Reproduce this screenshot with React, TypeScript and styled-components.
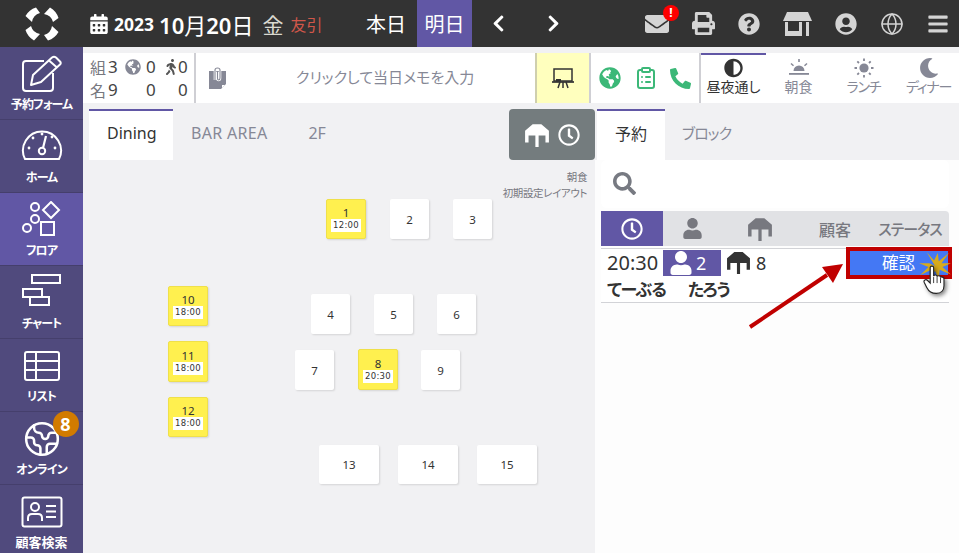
import styled, { createGlobalStyle } from "styled-components";
import {
  FaCalendarAlt,
  FaChevronLeft,
  FaChevronRight,
  FaEnvelope,
  FaPrint,
  FaQuestionCircle,
  FaUserCircle,
  FaBars,
  FaGlobeAmericas,
  FaWalking,
  FaPhoneAlt,
  FaAdjust,
  FaMoon,
  FaSearch,
  FaRegClock,
  FaUser,
} from "react-icons/fa";
import { Globe, Earth, ClipboardList } from "lucide-react";

const GlobalStyle = createGlobalStyle`
  html, body {
    margin: 0;
    padding: 0;
    background: #f1f1f3;
    font-family: "Noto Sans CJK JP", "Noto Sans", sans-serif;
    font-feature-settings: "palt";
    overflow: hidden;
  }
  * { box-sizing: border-box; }
`;

const TableGlyph = ({ size = 24, color = "currentColor" }: { size?: number; color?: string }) => (
  <svg width={size} height={size} viewBox="0 0 24 24" fill={color}>
    <path d="M8 2 H16 L23 8 V19 H19.8 V12.5 H13.5 V23 H10.5 V12.5 H4.2 V19 H1 V8 Z" />
  </svg>
);

const StoreGlyph = () => (
  <svg width="29" height="26" viewBox="0 0 29 26" fill="#d4d4d4">
    <path d="M4 1 H25 L29 10 H0 Z" />
    <path d="M2 11 H5 V20 H16 V11 H19 V25 H2 Z" />
    <rect x="23" y="11" width="3" height="14" />
  </svg>
);

const Logo = () => (
  <svg width="34" height="34" viewBox="0 0 34 34" fill="#fff">
    {[0, 90, 180, 270].map((r) => (
      <path
        key={r}
        d="M0.5 9 A18.5 18.5 0 0 1 11 0.5 L15 6 A11 11 0 0 0 7 15 Z"
        transform={`rotate(${r} 17 17)`}
      />
    ))}
  </svg>
);

const EditIcon = () => (
  <svg width="42" height="38" viewBox="0 0 42 38" fill="none" stroke="#fff" strokeWidth="2">
    <path d="M23 6 H5 Q2 6 2 9 V33 Q2 36 5 36 H29 Q32 36 32 33 V18" />
    <path d="M12 20 L31 2.5 Q33 1 35 2.5 L39 6.5 Q40.5 8 39 9.5 L20 27 L10 30 Z" strokeLinejoin="round" />
    <path d="M28 5.5 L36 12.5" />
  </svg>
);

const GaugeIcon = () => (
  <svg width="42" height="38" viewBox="0 0 42 38" fill="none" stroke="#fff" strokeWidth="2">
    <path d="M4 31 A19 19 0 1 1 38 31 Z" strokeLinejoin="round" />
    <circle cx="21" cy="23" r="3.2" />
    <path d="M22 20 L25 8" strokeWidth="2.2" />
    <g fill="#fff" stroke="none">
      <circle cx="8" cy="20" r="1.4" />
      <circle cx="12" cy="10" r="1.4" />
      <circle cx="21" cy="6" r="1.4" />
      <circle cx="31" cy="9" r="1.4" />
      <circle cx="34" cy="20" r="1.4" />
    </g>
  </svg>
);

const FloorIcon = () => (
  <svg width="40" height="38" viewBox="0 0 40 38" fill="none" stroke="#fff" strokeWidth="2">
    <circle cx="13" cy="6" r="4" />
    <circle cx="13" cy="18" r="4" />
    <circle cx="5" cy="27" r="4" />
    <path d="M29 1 L37 9 L29 17 L21 9 Z" />
    <rect x="19" y="21" width="13" height="13" />
  </svg>
);

const ChartIcon = () => (
  <svg width="40" height="40" viewBox="0 0 40 40" fill="none" stroke="#fff" strokeWidth="2">
    <rect x="10" y="2" width="28" height="8" />
    <rect x="1" y="16" width="19" height="8" />
    <rect x="8" y="24" width="19" height="8" />
  </svg>
);

const ListIcon = () => (
  <svg width="38" height="32" viewBox="0 0 38 32" fill="none" stroke="#fff" strokeWidth="2">
    <rect x="2" y="2" width="34" height="28" rx="2" />
    <path d="M2 11 H36 M2 20 H36 M13 2 V30" />
  </svg>
);

const CardIcon = () => (
  <svg width="42" height="32" viewBox="0 0 42 32" fill="none" stroke="#fff" strokeWidth="2">
    <rect x="1.5" y="1.5" width="39" height="29" rx="2" />
    <circle cx="14" cy="11" r="4" />
    <path d="M7 25 V22 Q7 18 11 18 H17 Q21 18 21 22 V25" />
    <path d="M25 10 H35 M25 15.5 H35 M25 21 H35" />
  </svg>
);

const MemoIcon = () => (
  <svg width="19" height="23" viewBox="0 0 19 23">
    <path d="M1 4 H18 V17 L13 22 H1 Z" fill="#868896" />
    <path d="M14 21 L14 18 H17 Z" fill="#fff" />
    <path
      d="M7 13 V3 Q7 1 9.5 1 Q12 1 12 3 V11 Q12 13 10.5 13 Q9.5 13 9.5 11 V5"
      fill="none"
      stroke="#fff"
      strokeWidth="2.6"
    />
    <path
      d="M7 13 V3 Q7 1 9.5 1 Q12 1 12 3 V11 Q12 13 10.5 13 Q9.5 13 9.5 11 V5"
      fill="none"
      stroke="#868896"
      strokeWidth="1.1"
    />
  </svg>
);

const SunriseIcon = () => (
  <svg width="22" height="20" viewBox="0 0 22 20" fill="#868896">
    <path d="M5.5 13 A5.5 5.5 0 0 1 16.5 13 Z" />
    <rect x="1" y="15" width="20" height="1.8" />
    <rect x="10.2" y="1" width="1.6" height="3" />
    <path d="M3.5 5 L6 7.2 L5 8.2 L2.5 6 Z M18.5 5 L16 7.2 L17 8.2 L19.5 6 Z" />
  </svg>
);

const SunIcon = () => (
  <svg width="20" height="20" viewBox="0 0 20 20" fill="#868896" stroke="#868896">
    <circle cx="10" cy="10" r="4.6" stroke="none" />
    <path
      d="M10 0.5 V3 M10 17 V19.5 M0.5 10 H3 M17 10 H19.5 M3.3 3.3 L5 5 M15 15 L16.7 16.7 M16.7 3.3 L15 5 M5 15 L3.3 16.7"
      strokeWidth="1.8"
    />
  </svg>
);

const BoardIcon = () => (
  <svg width="24" height="24" viewBox="0 0 24 24" fill="none" stroke="#333" strokeWidth="1.5">
    <rect x="3" y="3" width="18" height="12" />
    <path d="M1 16 H23" strokeWidth="1.7" />
    <path d="M9 16 L7 22 M12 16 V22 M15 16 L17 22" />
    <rect x="5" y="13" width="5" height="2.4" fill="#333" stroke="none" />
  </svg>
);

const HandCursor = () => (
  <svg width="23" height="31" viewBox="0 0 26 36">
    <path
      d="M8 3 C8 0.8 12 0.8 12 3 V13 C12.5 11 16 11 16 13.5 C16.5 12 20 12 20 14.5 C20.5 13.5 24 13.8 24 16 V24 C24 29 21 33 15 33 C9 33 6 30 4 26 L1 20 C0 17.5 3 16 5 18 L8 21 Z"
      fill="#fff"
      stroke="#222"
      strokeWidth="1.3"
    />
    <path d="M12 14 V21 M16 14 V21 M20 15 V21" stroke="#222" strokeWidth="1" />
  </svg>
);

const Burst = () => (
  <svg width="32" height="28" viewBox="0 0 34 30">
    <path
      d="M17 15 L8 0 L16 9 L20 1 L21 10 L32 1 L24 12 L34 12 L25 16 L34 24 L22 19 L21 29 L17 20 L11 29 L13 19 L1 25 L10 16 L0 12 L11 12 Z"
      fill="#d8ab1c"
    />
  </svg>
);

const menu = [
  { label: "予約フォーム", icon: <EditIcon />, tight: true },
  { label: "ホーム", icon: <GaugeIcon />, tight: true },
  { label: "フロア", icon: <FloorIcon />, active: true, tight: true },
  { label: "チャート", icon: <ChartIcon />, tight: true },
  { label: "リスト", icon: <ListIcon />, tight: true },
  { label: "オンライン", icon: <Earth size={38} strokeWidth={1.6} />, badge: "8", tight: true },
  { label: "顧客検索", icon: <CardIcon /> },
];

const tables = [
  { n: "1", x: 326, y: 199, w: 40, h: 40, time: "12:00" },
  { n: "2", x: 390, y: 199, w: 39, h: 40 },
  { n: "3", x: 453, y: 199, w: 39, h: 40 },
  { n: "4", x: 311, y: 294, w: 39, h: 40 },
  { n: "5", x: 374, y: 294, w: 39, h: 40 },
  { n: "6", x: 437, y: 294, w: 39, h: 40 },
  { n: "7", x: 295, y: 350, w: 39, h: 40 },
  { n: "8", x: 358, y: 349, w: 40, h: 41, time: "20:30" },
  { n: "9", x: 421, y: 350, w: 39, h: 40 },
  { n: "10", x: 168, y: 286, w: 40, h: 40, time: "18:00" },
  { n: "11", x: 168, y: 341, w: 40, h: 41, time: "18:00" },
  { n: "12", x: 168, y: 397, w: 40, h: 40, time: "18:00" },
  { n: "13", x: 319, y: 445, w: 60, h: 39 },
  { n: "14", x: 398, y: 445, w: 60, h: 39 },
  { n: "15", x: 477, y: 445, w: 60, h: 39 },
];

export default function App() {
  return (
    <Page>
      <GlobalStyle />
      <TopBar>
        <LogoSlot>
          <Logo />
        </LogoSlot>
        <DateBlock>
          <FaCalendarAlt size={20} color="#fff" />
          <Year>2023</Year>
          <MonthDay>
            <b>10</b>月<b>20</b>日
          </MonthDay>
          <Weekday>金</Weekday>
          <Rokuyo>友引</Rokuyo>
        </DateBlock>
        <DayButton>本日</DayButton>
        <DayButton $active>明日</DayButton>
        <NavArrows>
          <FaChevronLeft size={19} />
          <FaChevronRight size={19} />
        </NavArrows>
        <TopIcons>
          <MailIcon>
            <FaEnvelope size={24} />
            <AlertDot>!</AlertDot>
          </MailIcon>
          <FaPrint size={23} />
          <FaQuestionCircle size={22} />
          <StoreGlyph />
          <FaUserCircle size={22} />
          <Globe size={24} strokeWidth={1.5} />
          <FaBars size={22} />
        </TopIcons>
      </TopBar>
      <Body>
        <SideNav>
          {menu.map((m) => (
            <SideItem key={m.label} $active={m.active}>
              <SideIcon>
                {m.icon}
                {m.badge && <SideBadge>{m.badge}</SideBadge>}
              </SideIcon>
              <SideLabel $tight={m.tight}>{m.label}</SideLabel>
            </SideItem>
          ))}
        </SideNav>
        <Main>
          <StatusBar>
            <Counts>
              <CountLabel>組</CountLabel>
              <CountNum>3</CountNum>
              <FaGlobeAmericas size={16} color="#868896" />
              <CountNum>0</CountNum>
              <FaWalking size={16} color="#555" />
              <CountNum>0</CountNum>
              <CountLabel>名</CountLabel>
              <CountNum>9</CountNum>
              <span />
              <CountNum>0</CountNum>
              <span />
              <CountNum>0</CountNum>
            </Counts>
            <Memo>
              <MemoIcon />
              <MemoText>クリックして当日メモを入力</MemoText>
            </Memo>
            <BoardButton>
              <BoardIcon />
            </BoardButton>
            <QuickIcons>
              <FaGlobeAmericas size={22} />
              <ClipboardList size={24} strokeWidth={2} />
              <FaPhoneAlt size={21} />
            </QuickIcons>
            <Meals>
              <Meal $active>
                <FaAdjust size={19} />
                <span>昼夜通し</span>
              </Meal>
              <Meal>
                <SunriseIcon />
                <span>朝食</span>
              </Meal>
              <Meal $kana>
                <SunIcon />
                <span>ランチ</span>
              </Meal>
              <Meal $kana>
                <FaMoon size={20} />
                <span>ディナー</span>
              </Meal>
            </Meals>
          </StatusBar>
          <Columns>
            <FloorColumn>
              <TabRow>
                <FloorTab $active>Dining</FloorTab>
                <FloorTab>BAR AREA</FloorTab>
                <FloorTab>2F</FloorTab>
                <ModeButton>
                  <TableGlyph size={26} color="#fff" />
                  <FaRegClock size={22} />
                </ModeButton>
              </TabRow>
              <LayoutNote>
                朝食
                <br />
                初期設定レイアウト
              </LayoutNote>
            </FloorColumn>
            <BookingColumn>
              <BookingTabs>
                <BookingTab $active>予約</BookingTab>
                <BookingTab>ブロック</BookingTab>
              </BookingTabs>
              <BookingPanel>
                <SearchBox>
                  <FaSearch size={23} color="#777a82" />
                </SearchBox>
                <HeaderRow>
                  <HeaderCell $active $w={62}>
                    <FaRegClock size={22} />
                  </HeaderCell>
                  <HeaderCell $w={58}>
                    <FaUser size={21} />
                  </HeaderCell>
                  <HeaderCell $w={78}>
                    <TableGlyph size={26} />
                  </HeaderCell>
                  <HeaderCell $w={72}>顧客</HeaderCell>
                  <HeaderCell $w={78} $kana>
                    ステータス
                  </HeaderCell>
                </HeaderRow>
                <BookingRow>
                  <BookingTop>
                    <Time>20:30</Time>
                    <Guests>
                      <FaUser size={24} />
                      <span>2</span>
                    </Guests>
                    <TableNo>
                      <TableGlyph size={25} color="#333" />
                      <span>8</span>
                    </TableNo>
                    <StatusChip>確認</StatusChip>
                  </BookingTop>
                  <GuestName>
                    <span>てーぶる</span>
                    <span>たろう</span>
                  </GuestName>
                </BookingRow>
              </BookingPanel>
            </BookingColumn>
          </Columns>
        </Main>
      </Body>
      {tables.map((t) => (
        <TableCard
          key={t.n}
          $x={t.x}
          $y={t.y}
          $w={t.w}
          $h={t.h}
          $busy={!!t.time}
        >
          <span>{t.n}</span>
          {t.time && <TimeTag>{t.time}</TimeTag>}
        </TableCard>
      ))}
      <ArrowLayer width="100" height="66" viewBox="0 0 100 66">
        <path d="M3 63 L80 11" stroke="#c00000" strokeWidth="4" />
        <path d="M96 0 L75 3 L86 19 Z" fill="#c00000" />
      </ArrowLayer>
      <BurstLayer>
        <Burst />
      </BurstLayer>
      <HandLayer>
        <HandCursor />
      </HandLayer>
    </Page>
  );
}

const Page = styled.div`
  position: relative;
  width: 959px;
  height: 553px;
  overflow: hidden;
  background: #f1f1f3;
`;

const TopBar = styled.header`
  display: flex;
  align-items: center;
  height: 47px;
  background: #333;
  color: #fff;
`;

const LogoSlot = styled.div`
  width: 83px;
  display: flex;
  justify-content: center;
`;

const DateBlock = styled.div`
  display: flex;
  align-items: center;
  width: 272px;
  padding-left: 6px;
`;

const Year = styled.span`
  font: 700 17.5px "Noto Sans", sans-serif;
  margin-left: 5px;
`;

const MonthDay = styled.span`
  font-size: 22px;
  font-weight: 400;
  margin-left: 5px;
  b {
    font: 600 22px "Noto Sans", sans-serif;
  }
`;

const Weekday = styled.span`
  font-size: 21px;
  color: #d9d9d0;
  margin-left: 9px;
`;

const Rokuyo = styled.span`
  font-size: 16px;
  color: #d0574a;
  margin-left: 7px;
`;

const DayButton = styled.div<{ $active?: boolean }>`
  width: ${(p) => (p.$active ? 55 : 62)}px;
  height: 47px;
  display: flex;
  align-items: center;
  justify-content: center;
  font-size: 20px;
  background: ${(p) => (p.$active ? "#6157a5" : "transparent")};
`;

const NavArrows = styled.div`
  display: flex;
  align-items: center;
  gap: 36px;
  margin-left: 17px;
`;

const TopIcons = styled.div`
  margin-left: auto;
  width: 314px;
  padding-right: 10px;
  display: flex;
  align-items: center;
  justify-content: space-between;
  color: #d4d4d4;
`;

const MailIcon = styled.div`
  position: relative;
  display: flex;
`;

const AlertDot = styled.span`
  position: absolute;
  top: -7px;
  right: -10px;
  width: 16px;
  height: 16px;
  border-radius: 50%;
  background: #f00;
  color: #fff;
  font: 700 12px/16px "Noto Sans", sans-serif;
  text-align: center;
`;

const Body = styled.div`
  display: flex;
  height: 506px;
`;

const SideNav = styled.nav`
  width: 83px;
  flex: none;
  background: #504a7d;
`;

const SideItem = styled.div<{ $active?: boolean }>`
  height: 73px;
  display: flex;
  flex-direction: column;
  align-items: center;
  padding-top: 6px;
  border-bottom: 1px solid #453f6c;
  color: #fff;
  background: ${(p) => (p.$active ? "#6157a5" : "transparent")};
`;

const SideIcon = styled.div`
  position: relative;
  height: 42px;
  display: flex;
  align-items: center;
  justify-content: center;
`;

const SideBadge = styled.span`
  position: absolute;
  top: -7px;
  right: -18px;
  width: 26px;
  height: 26px;
  border-radius: 50%;
  background: #d27b00;
  color: #fff;
  font: 700 18px/26px "Noto Sans", sans-serif;
  text-align: center;
`;

const SideLabel = styled.span<{ $tight?: boolean }>`
  font-size: ${(p) => (p.$tight ? 12 : 13)}px;
  letter-spacing: ${(p) => (p.$tight ? "-0.9px" : "0")};
  font-weight: 700;
  line-height: 18px;
  white-space: nowrap;
`;

const Main = styled.main`
  flex: 1;
  display: flex;
  flex-direction: column;
  min-width: 0;
`;

const StatusBar = styled.div`
  display: flex;
  height: 50px;
  margin-top: 6px;
  background: #fff;
`;

const Counts = styled.div`
  flex: none;
  width: 113px;
  padding: 2px 0 0 7px;
  border-right: 2px solid #cfcfd4;
  display: grid;
  grid-template-columns: 18px 17px 21px 17px 15px 12px;
  grid-auto-rows: 23px;
  align-items: center;
  font-size: 16px;
  color: #444;
`;

const CountLabel = styled.span`
  color: #77787f;
`;

const CountNum = styled.span`
  font: 400 17px "Noto Sans", sans-serif;
  color: #444;
`;

const Memo = styled.div`
  flex: none;
  width: 339px;
  display: flex;
  align-items: center;
  padding-left: 12px;
`;

const MemoText = styled.span`
  font-size: 15px;
  line-height: 20px;
  margin: -2px 0 0 69px;
  color: #868896;
`;

const BoardButton = styled.div`
  flex: none;
  width: 56px;
  display: flex;
  align-items: center;
  justify-content: center;
  background: #ffffbe;
  border-left: 2px solid #cfcfae;
  border-right: 2px solid #cfcfd4;
`;

const QuickIcons = styled.div`
  flex: none;
  width: 110px;
  padding: 0 8px;
  display: flex;
  align-items: center;
  justify-content: space-between;
  color: #3cb878;
  border-right: 2px solid #cfcfd4;
`;

const Meals = styled.div`
  flex: none;
  display: flex;
`;

const Meal = styled.div<{ $active?: boolean; $kana?: boolean }>`
  width: 65px;
  flex: none;
  display: flex;
  flex-direction: column;
  align-items: center;
  justify-content: flex-start;
  padding-top: 3px;
  font-size: 14px;
  letter-spacing: ${(p) => (p.$kana ? "-1.2px" : "0")};
  line-height: 19px;
  white-space: nowrap;
  color: ${(p) => (p.$active ? "#333" : "#868896")};
  border-top: 2px solid ${(p) => (p.$active ? "#6157a5" : "transparent")};
  svg {
    height: 20px;
    margin-bottom: -1px;
  }
`;

const Columns = styled.div`
  flex: 1;
  display: flex;
  margin-top: 6px;
`;

const FloorColumn = styled.section`
  width: 512px;
  position: relative;
  padding-left: 6px;
`;

const TabRow = styled.div`
  display: flex;
  height: 51px;
`;

const FloorTab = styled.div<{ $active?: boolean }>`
  padding: 0 18px 6px;
  display: flex;
  align-items: center;
  font: 400 16px "Noto Sans", sans-serif;
  letter-spacing: 0.3px;
  color: ${(p) => (p.$active ? "#333" : "#868896")};
  background: ${(p) => (p.$active ? "#fff" : "transparent")};
  border-top: 2px solid ${(p) => (p.$active ? "#6157a5" : "transparent")};
  &:first-child {
    width: 84px;
    letter-spacing: 0;
  }
  & + & + & {
    margin-left: 5px;
    letter-spacing: 0;
  }
`;

const ModeButton = styled.div`
  margin-left: auto;
  width: 86px;
  display: flex;
  align-items: center;
  justify-content: center;
  gap: 8px;
  background: #747c7e;
  color: #fff;
  border-radius: 4px;
`;

const LayoutNote = styled.div`
  position: absolute;
  top: 60px;
  right: 8px;
  text-align: right;
  font-size: 10.5px;
  letter-spacing: -0.4px;
  line-height: 16px;
  color: #77787f;
`;

const BookingColumn = styled.section`
  flex: 1;
  display: flex;
  flex-direction: column;
`;

const BookingTabs = styled.div`
  display: flex;
  height: 51px;
  padding-left: 2px;
`;

const BookingTab = styled.div<{ $active?: boolean }>`
  padding: 0 17px 6px;
  min-width: 68px;
  display: flex;
  align-items: center;
  justify-content: center;
  font-size: 16px;
  color: ${(p) => (p.$active ? "#333" : "#868896")};
  background: ${(p) => (p.$active ? "#fff" : "transparent")};
  border-top: 2px solid ${(p) => (p.$active ? "#6157a5" : "transparent")};
  & + & {
    font-size: 15px;
    letter-spacing: -1px;
  }
`;

const BookingPanel = styled.div`
  flex: 1;
  background: #fdfdfd;
  padding: 0 10px 0 6px;
`;

const SearchBox = styled.div`
  height: 48px;
  padding: 0 0 2px 12px;
  display: flex;
  align-items: center;
  background: #fff;
  border-radius: 6px;
`;

const HeaderRow = styled.div`
  display: flex;
  height: 35px;
  margin-top: 3px;
  background: #e1e2e5;
  border-radius: 0 4px 0 0;
  color: #77787f;
`;

const HeaderCell = styled.div<{ $active?: boolean; $kana?: boolean; $w: number }>`
  width: ${(p) => p.$w}px;
  display: flex;
  align-items: center;
  justify-content: center;
  font-size: ${(p) => (p.$kana ? 15 : 16)}px;
  letter-spacing: ${(p) => (p.$kana ? "-1px" : "0")};
  font-weight: 500;
  white-space: nowrap;
  color: ${(p) => (p.$active ? "#fff" : "#77787f")};
  background: ${(p) => (p.$active ? "#6157a5" : "transparent")};
`;

const BookingRow = styled.div`
  margin-top: 2px;
  height: 55px;
  background: #fff;
  border-top: 1px solid #d2d3d7;
  border-bottom: 1px solid #d2d3d7;
`;

const BookingTop = styled.div`
  display: flex;
  align-items: center;
  height: 27px;
  position: relative;
`;

const Time = styled.span`
  width: 62px;
  padding-left: 6px;
  font: 400 20px "Noto Sans", sans-serif;
  color: #333;
`;

const Guests = styled.div`
  width: 58px;
  height: 26px;
  padding-left: 6px;
  display: flex;
  align-items: center;
  gap: 3px;
  background: #6157a5;
  color: #fff;
  font: 400 18px "Noto Sans", sans-serif;
`;

const TableNo = styled.div`
  display: flex;
  align-items: center;
  gap: 5px;
  margin-left: 5px;
  font: 400 18px "Noto Sans", sans-serif;
  color: #333;
`;

const StatusChip = styled.div`
  position: absolute;
  top: -2px;
  right: -3px;
  width: 106px;
  height: 32px;
  padding: 0 33px 2px 0;
  display: flex;
  align-items: center;
  justify-content: flex-end;
  border: 4px solid #c00000;
  background: #4478f4;
  color: #fff;
  font-size: 16.5px;
`;

const GuestName = styled.div`
  display: flex;
  gap: 22px;
  padding-left: 6px;
  font-size: 17px;
  letter-spacing: -1px;
  font-weight: 700;
  line-height: 25px;
  color: #333;
`;

const TableCard = styled.div<{ $x: number; $y: number; $w: number; $h: number; $busy: boolean }>`
  position: absolute;
  left: ${(p) => p.$x}px;
  top: ${(p) => p.$y}px;
  width: ${(p) => p.$w}px;
  height: ${(p) => p.$h}px;
  display: flex;
  flex-direction: column;
  align-items: center;
  justify-content: center;
  font: 400 11.5px/13px "Noto Sans", sans-serif;
  color: #333;
  background: ${(p) => (p.$busy ? "#fff04f" : "#fff")};
  border: ${(p) => (p.$busy ? "1px solid #efe04a" : "none")};
  border-radius: 2px;
  box-shadow: 1px 1px 2px rgba(0, 0, 0, 0.12);
`;

const TimeTag = styled.span`
  padding: 0 2px;
  background: #fff;
  font: 400 8.5px/13px "DejaVu Sans", sans-serif;
  letter-spacing: 0.3px;
`;

const ArrowLayer = styled.svg`
  position: absolute;
  left: 747px;
  top: 264px;
`;

const BurstLayer = styled.div`
  position: absolute;
  left: 919px;
  top: 252px;
`;

const HandLayer = styled.div`
  position: absolute;
  left: 923px;
  top: 265px;
  filter: drop-shadow(2px 2px 2px rgba(0, 0, 0, 0.5));
`;
